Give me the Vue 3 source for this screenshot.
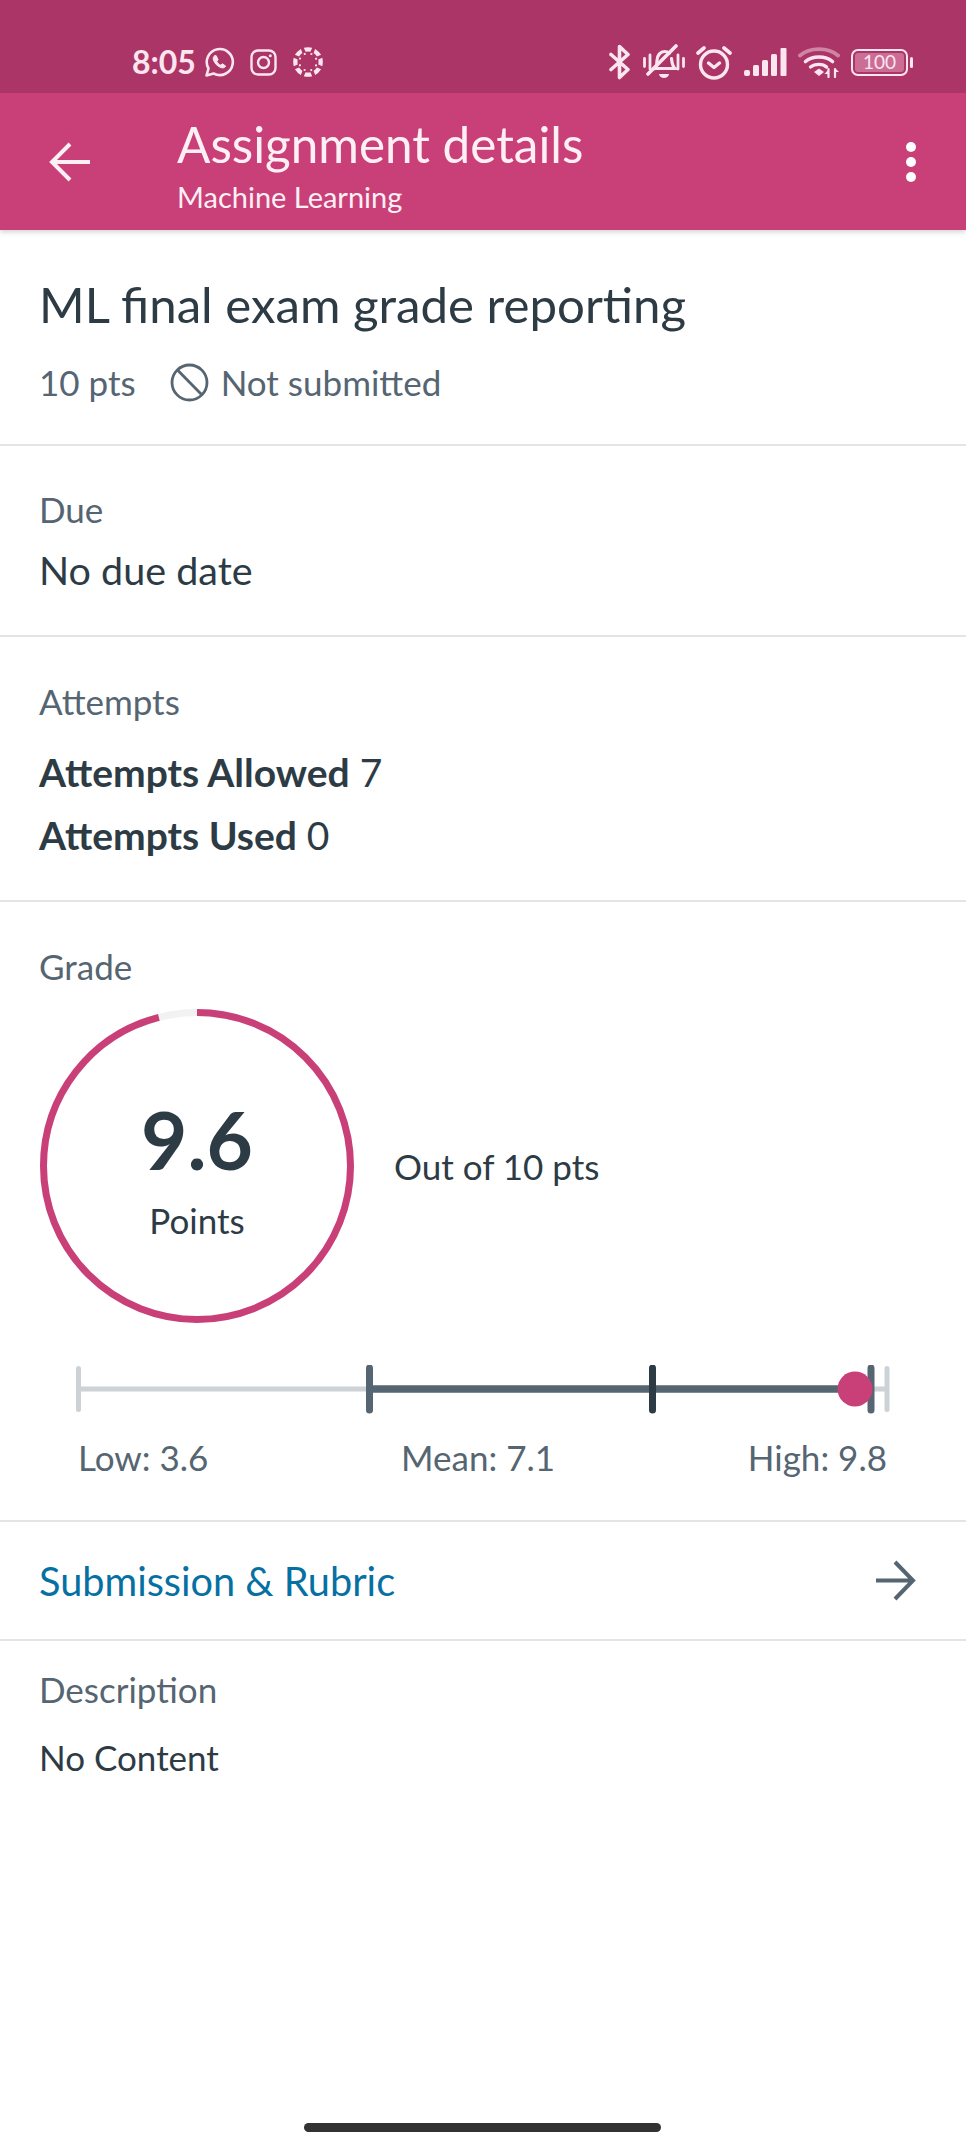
<template>
  <div class="screen">
    <header class="top">
      <div class="status">
        <div class="status-left">
          <span class="time">8:05</span>
          <svg class="ic" width="31" height="31" viewBox="0 0 31 31" fill="none" stroke="currentColor" stroke-width="2.6">
            <path d="M2.500 28.500l2-7A13 13 0 1 1 9.600 26.500z" stroke-linejoin="round" />
            <path d="M10.800 8.600c-1.600 1-2 2.800-1.200 4.800 1.300 3.300 4 6 7.400 7.200 2 .7 3.800.2 4.700-1.500l-3.300-2.300-1.600 1.400c-1.800-.8-3.200-2.200-4-4l1.300-1.600-2-4z" fill="currentColor" stroke-width="1" stroke-linejoin="round" />
          </svg>
          <svg class="ic insta" width="27" height="27" viewBox="0 0 27 27" fill="none" stroke="currentColor" stroke-width="2.4">
            <rect x="1.500" y="1.500" width="24" height="24" rx="6.500" />
            <circle cx="13.500" cy="13.500" r="5.500" />
            <circle cx="20.300" cy="6.700" r="1.500" fill="currentColor" stroke="none" />
          </svg>
          <svg class="ic canvas" width="30" height="30" viewBox="-15 -15 30 30" fill="currentColor">
            <g v-for="a in spokes" :key="a" :transform="`rotate(${a})`">
              <path d="M-4.200 -14.300Q0 -15.300 4.200 -14.300L2.400 -10.300Q0 -10.700 -2.400 -10.300z" />
              <circle cx="3.400" cy="-8" r="1.100" />
            </g>
          </svg>
        </div>
        <div class="status-right">
          <svg width="24" height="36" viewBox="0 0 24 36" fill="none" stroke="currentColor" stroke-width="3.600" stroke-linejoin="round" stroke-linecap="round">
            <path d="M3 10.500l17 15-8.500 8V2.500l8.500 8-17 15" />
          </svg>
          <svg width="42" height="36" viewBox="0 0 42 36" fill="none" stroke="currentColor" stroke-width="3.200" stroke-linecap="round">
            <path d="M11.500 24.500c2.500-2.500 2.500-5 2.500-8 0-5 3.500-9 7.500-9 2 0 3.500.5 5 1.500M28.500 14.500c.5 4 .5 7 3.500 10H13" />
            <path d="M5 30L33 2" stroke-width="3.600" />
            <path d="M16 30h10a5 4 0 0 1-10 0z" fill="currentColor" stroke="none" />
            <path d="M1.500 14.500v8M7 11v14M35 11v14M40.500 14.500v8" stroke-width="2.800" />
          </svg>
          <svg width="36" height="36" viewBox="0 0 36 36" fill="none" stroke="currentColor" stroke-width="3.400">
            <circle cx="18" cy="20.500" r="13.500" />
            <path d="M12.500 19l5.500 4.500 5.500-4.500" stroke-linecap="round" stroke-linejoin="round" />
            <path d="M2 9l6-5M34 9l-6-5" stroke-width="3.600" stroke-linecap="round" />
          </svg>
          <svg width="44" height="30" viewBox="0 0 44 30" fill="currentColor">
            <rect x="1" y="23" width="6" height="6" rx="2" />
            <rect x="10" y="18" width="6" height="11" rx="1.500" />
            <rect x="19" y="13" width="6" height="16" rx="1.500" />
            <rect x="28" y="7" width="6" height="22" rx="1.500" />
            <rect x="37.500" y="1" width="6" height="28" rx="1" />
          </svg>
          <svg width="42" height="32" viewBox="0 0 42 32" fill="none" stroke="currentColor" stroke-linecap="round">
            <path d="M2 9.500C12 1 30 1 40 9.500" stroke-width="3.800" opacity="0.45" />
            <path d="M7.500 15.500c7-6 20-6 27 0" stroke-width="3.600" />
            <path d="M12.500 21c4.500-3.500 12.500-3.500 16 0" stroke-width="3.400" />
            <path d="M16 26l5-3.500 5 3.500-5 4z" fill="currentColor" stroke="none" />
            <path d="M30.500 23v8M37 23v8" stroke-width="2.200" />
            <path d="M26.500 28l3.500-4v4zM41 26l-3.500-3.500V26z" fill="currentColor" stroke="none" />
          </svg>
          <div class="battery">
            <div class="battery-body"><span>100</span></div>
            <div class="battery-tip"></div>
          </div>
        </div>
      </div>
      <div class="appbar">
        <svg class="back" width="42" height="40" viewBox="0 0 42 40" fill="none" stroke="currentColor" stroke-width="4">
          <path d="M41 20H4M21 2L3 20l18 18" />
        </svg>
        <div class="titles">
          <div class="title">Assignment details</div>
          <div class="subtitle">Machine Learning</div>
        </div>
        <div class="menu"><i></i><i></i><i></i></div>
      </div>
    </header>

    <section class="head">
      <h1>ML final exam grade reporting</h1>
      <div class="meta">
        <span>10 pts</span>
        <span class="state">
          <svg width="39" height="39" viewBox="0 0 39 39" fill="none" stroke="currentColor" stroke-width="2.800">
            <circle cx="19.500" cy="19.500" r="17.500" />
            <path d="M7.500 7l24.500 25" />
          </svg>
          Not submitted
        </span>
      </div>
    </section>

    <section class="due">
      <div class="label">Due</div>
      <div class="value">No due date</div>
    </section>

    <section class="attempts">
      <div class="label">Attempts</div>
      <div class="attempt-row"><b>Attempts Allowed</b> 7</div>
      <div class="attempt-row"><b>Attempts Used</b> 0</div>
    </section>

    <section class="grade">
      <div class="label">Grade</div>
      <div class="grade-main">
        <div class="ring">
          <svg width="314" height="314" viewBox="0 0 314 314" fill="none" stroke-width="7">
            <circle cx="157" cy="157" r="153.500" stroke="#f2f2f2" />
            <circle
              cx="157"
              cy="157"
              r="153.500"
              stroke="#c93f77"
              pathLength="100"
              stroke-dasharray="96 4"
              transform="rotate(-90 157 157)"
            />
          </svg>
          <div class="ring-text">
            <div class="score">9.6</div>
            <div class="points">Points</div>
          </div>
        </div>
        <div class="out-of">Out of 10 pts</div>
      </div>
      <svg class="range" width="966" height="50" viewBox="0 0 966 50" fill="none" stroke-linecap="round">
        <path d="M78.500 3.500v41M887 3.500v41" stroke="#ccd2d6" stroke-width="5" />
        <path d="M78.500 24H887" stroke="#ccd2d6" stroke-width="5" stroke-linecap="butt" />
        <path d="M369.500 24H871" stroke="#556572" stroke-width="7.500" stroke-linecap="butt" />
        <path d="M369.500 3v42M871 3v42" stroke="#556572" stroke-width="7" />
        <path d="M652.500 3v42" stroke="#2d3b45" stroke-width="7" />
        <circle cx="855" cy="24" r="17.500" fill="#c93f77" />
      </svg>
      <div class="range-labels">
        <span>Low: 3.6</span>
        <span>Mean: 7.1</span>
        <span>High: 9.8</span>
      </div>
    </section>

    <section class="link-row">
      <span>Submission &amp; Rubric</span>
      <svg width="41" height="41" viewBox="0 0 41 41" fill="none" stroke="#556572" stroke-width="4">
        <path d="M1 20.500h36M20 2l18 18.500L20 39" />
      </svg>
    </section>

    <section class="desc">
      <div class="label">Description</div>
      <div class="desc-text">No Content</div>
    </section>

    <div class="home-bar"></div>
  </div>
</template>

<script setup>
const spokes = [0, 45, 90, 135, 180, 225, 270, 315]
</script>

<style scoped>
.screen {
  width: 966px;
  height: 2147px;
  position: relative;
  overflow: hidden;
  background: #fff;
  color: #2d3b45;
  font-family: Lato, "Liberation Sans", sans-serif;
  font-variant-ligatures: common-ligatures discretionary-ligatures;
}

.top {
  box-shadow: 0 2px 5px rgba(0, 0, 0, 0.18);
  color: #fbe6ef;
}

.status {
  height: 93px;
  box-sizing: border-box;
  padding: 45px 0 0 132px;
  background: #ab3566;
  display: flex;
  justify-content: space-between;
  align-items: flex-start;
}

.status-left {
  display: flex;
  align-items: center;
  height: 34px;
}

.time {
  font-size: 32px;
  font-weight: 700;
  line-height: 34px;
}

.ic {
  margin-left: 8px;
}

.insta {
  margin-left: 15px;
}

.canvas {
  margin-left: 16px;
}

.status-right {
  display: flex;
  align-items: center;
  gap: 11px;
  padding-right: 53px;
  height: 34px;
}

.battery {
  display: flex;
  align-items: center;
  gap: 2px;
}

.battery-body {
  width: 57px;
  height: 27px;
  box-sizing: border-box;
  border: 2.500px solid currentColor;
  border-radius: 7px;
  padding: 2px;
  display: flex;
}

.battery-body span {
  flex: 1;
  border-radius: 3px;
  background: #cb6d95;
  font-size: 19px;
  line-height: 18px;
  text-align: center;
}

.battery-tip {
  width: 3px;
  height: 11px;
  border-radius: 2px;
  background: currentColor;
}

.appbar {
  height: 137px;
  background: #c93f77;
  color: #fdf0f5;
  display: flex;
  align-items: center;
  position: relative;
}

.back {
  margin-left: 49px;
  flex: none;
}

.titles {
  margin-left: 86px;
  flex: 1;
  align-self: flex-start;
  margin-top: 24px;
}

.title {
  font-size: 49.400px;
  line-height: 54px;
}

.subtitle {
  font-size: 29px;
  line-height: 36px;
  margin-top: 8px;
  font-variant-ligatures: common-ligatures;
}

.menu {
  display: flex;
  flex-direction: column;
  gap: 5px;
  margin-right: 50px;
}

.menu i {
  width: 10px;
  height: 10px;
  border-radius: 50%;
  background: #fff;
}

section {
  box-sizing: border-box;
  padding-left: 39px;
  padding-right: 40px;
  border-bottom: 2px solid #e2e4e6;
}

.head {
  height: 216px;
  padding-top: 45px;
}

h1 {
  margin: 0;
  font-size: 49.200px;
  font-weight: 400;
  line-height: 58px;
}

.meta {
  display: flex;
  align-items: center;
  gap: 34px;
  margin-top: 29px;
  font-size: 35px;
  line-height: 40px;
  color: #556572;
}

.state {
  display: flex;
  align-items: center;
  gap: 12px;
}

.label {
  font-size: 35px;
  line-height: 40px;
  color: #556572;
}

.due {
  height: 191px;
  padding-top: 43px;
}

.value {
  font-size: 39.500px;
  line-height: 44px;
  margin-top: 19px;
}

.attempts {
  height: 265px;
  padding-top: 44px;
}

.attempt-row {
  font-size: 39px;
  line-height: 44px;
  color: #2d3b45;
  margin-top: 19px;
}

.attempts .label + .attempt-row {
  margin-top: 29px;
}

.attempt-row b {
  font-weight: 700;
}

.grade {
  height: 620px;
  padding-top: 44px;
}

.grade-main {
  display: flex;
  align-items: center;
  gap: 40px;
  margin: 23px 0 0 1px;
}

.ring {
  width: 314px;
  height: 314px;
  position: relative;
  flex: none;
}

.ring-text {
  position: absolute;
  inset: 0;
  box-sizing: border-box;
  padding-top: 5px;
  display: flex;
  flex-direction: column;
  align-items: center;
  justify-content: center;
}

.score {
  font-size: 80px;
  font-weight: 700;
  line-height: 84px;
}

.points {
  font-size: 35px;
  line-height: 40px;
  margin-top: 19px;
}

.out-of {
  font-size: 35px;
  line-height: 40px;
}

.range {
  display: block;
  margin: 42px 0 0 -39px;
}

.range-labels {
  display: flex;
  justify-content: space-between;
  margin: 22px 39px 0 39px;
  font-size: 35px;
  line-height: 40px;
  color: #556572;
}

.link-row {
  height: 119px;
  display: flex;
  align-items: center;
  justify-content: space-between;
  font-size: 39.700px;
  color: #0770a3;
  padding-right: 50px;
}

.desc {
  border-bottom: 0;
  padding-top: 28px;
}

.desc-text {
  font-size: 35px;
  line-height: 40px;
  margin-top: 28px;
}

.home-bar {
  position: absolute;
  left: 304px;
  top: 2123px;
  width: 357px;
  height: 9px;
  border-radius: 5px;
  background: #333;
}
</style>
